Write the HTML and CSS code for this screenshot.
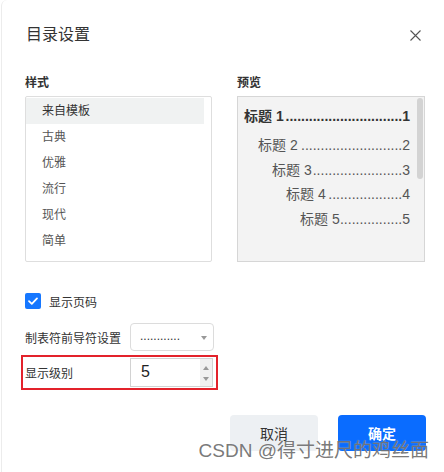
FILE: index.html
```html
<!DOCTYPE html>
<html lang="zh-CN">
<head>
<meta charset="utf-8">
<title>目录设置</title>
<link rel="stylesheet" href="styles.css">
</head>
<body>
<div class="dialog">
  <div class="header">
    <div class="title">目录设置</div>
    <svg class="close" width="11" height="11" viewBox="0 0 11 11"><path d="M0.5 0.5L10.5 10.5M10.5 0.5L0.5 10.5" stroke="#555" stroke-width="1.1" fill="none"/></svg>
  </div>
  <div class="columns">
    <div class="col">
      <div class="label">样式</div>
      <div class="list">
        <div class="item selected">来自模板</div>
        <div class="item">古典</div>
        <div class="item">优雅</div>
        <div class="item">流行</div>
        <div class="item">现代</div>
        <div class="item">简单</div>
      </div>
    </div>
    <div class="col">
      <div class="label">预览</div>
      <div class="preview">
        <div class="toc l1"><span class="t">标题 1</span><span class="dots">..............................</span><span class="n">1</span></div>
        <div class="toc l2"><span class="t">标题 2</span><span class="dots">..........................</span><span class="n">2</span></div>
        <div class="toc l3"><span class="t">标题 3</span><span class="dots">.......................</span><span class="n">3</span></div>
        <div class="toc l4"><span class="t">标题 4</span><span class="dots">...................</span><span class="n">4</span></div>
        <div class="toc l5"><span class="t">标题 5</span><span class="dots">................</span><span class="n">5</span></div>
        <div class="thumb"></div>
      </div>
    </div>
  </div>
  <div class="check-row">
    <span class="checkbox"><svg width="16" height="16" viewBox="0 0 16 16"><path d="M4 8.2L6.8 10.8L12 5.4" stroke="#fff" stroke-width="1.8" fill="none" stroke-linecap="round" stroke-linejoin="round"/></svg></span>
    <span class="check-label">显示页码</span>
  </div>
  <div class="field-row">
    <span class="field-label">制表符前导符设置</span>
    <div class="select"><span class="sel-dots">............</span><span class="caret"></span></div>
  </div>
  <div class="field-row level">
    <span class="field-label">显示级别</span>
    <div class="number"><span class="num-val">5</span><span class="spin"><span class="up"></span><span class="down"></span></span></div>
  </div>
  <div class="footer">
    <button class="btn cancel">取消</button>
    <button class="btn ok">确定</button>
  </div>
  <div class="watermark">CSDN @得寸进尺的鸡丝面</div>
</div>
</body>
</html>
```
FILE: styles.css
```css
* { box-sizing: border-box; }
html, body { margin: 0; padding: 0; background: #fff; }
body {
  font-family: "Liberation Sans", "Noto Sans CJK SC", sans-serif;
  color: #333;
}
.dialog {
  position: relative;
  width: 443px;
  height: 472px;
  margin-left: 1px;
  border-left: 1px solid #ececec;
  border-top-left-radius: 6px;
  overflow: hidden;
  padding: 23px 0 0 23px;
}
.header {
  display: flex;
  justify-content: space-between;
  align-items: center;
  height: 24px;
  padding-right: 23px;
}
.title {
  font-size: 16px;
  line-height: 24px;
  margin-left: 1px;
  color: #333;
}
.close { display: block; }
.columns {
  display: grid;
  grid-template-columns: 187px 188px;
  column-gap: 25px;
  margin-top: 28px;
}
.label {
  font-size: 12px;
  line-height: 16px;
  font-weight: bold;
  color: #333;
  margin-bottom: 5px;
}
.list {
  height: 166px;
  border: 1px solid #dedede;
  border-radius: 2px;
  padding: 1px 7px 0 0;
}
.item {
  height: 26px;
  line-height: 26px;
  font-size: 12px;
  padding-left: 16px;
  color: #555;
}
.item.selected { background: #f0f2f2; color: #333; }
.preview {
  position: relative;
  height: 166px;
  background: #f3f3f3;
  border: 1px solid #d6d6d6;
  padding: 3px 14px 0 6px;
}
.toc {
  display: flex;
  align-items: baseline;
  height: 24.5px;
  line-height: 24.5px;
  font-size: 14px;
  color: #555;
  white-space: nowrap;
}
.toc.l1 { height: 33px; line-height: 33px; font-weight: bold; color: #333; }
.toc.l2 { padding-left: 14px; }
.toc.l3 { padding-left: 28px; }
.toc.l4 { padding-left: 42px; }
.toc.l5 { padding-left: 56px; }
.toc .t { flex: none; }
.toc .dots { flex: 1 1 auto; text-align: right; min-width: 0; }
.toc .n { flex: none; }
.thumb {
  position: absolute;
  right: 1px;
  top: 1px;
  width: 6px;
  height: 81px;
  border-radius: 3px;
  background: #d3d3d3;
}
.check-row {
  display: flex;
  align-items: center;
  gap: 8px;
  margin-top: 31px;
  height: 16px;
}
.checkbox {
  width: 16px;
  height: 16px;
  border-radius: 2px;
  background: #1677ff;
  display: block;
}
.checkbox svg { display: block; }
.check-label { font-size: 12px; color: #333; }
.field-row {
  display: flex;
  align-items: center;
  margin-top: 14px;
  width: 189px;
}
.field-label {
  width: 105px;
  flex: none;
  font-size: 12px;
  color: #333;
}
.select {
  position: relative;
  width: 84px;
  height: 28px;
  border: 1px solid #dcdcdc;
  border-radius: 4px;
  display: flex;
  align-items: center;
  padding-left: 9px;
}
.sel-dots { font-size: 12px; color: #333; line-height: 1; margin-top: -3px; }
.caret {
  position: absolute;
  right: 6px;
  top: 12px;
  width: 0;
  height: 0;
  border-left: 3px solid transparent;
  border-right: 3px solid transparent;
  border-top: 4px solid #999;
}
.field-row.level {
  margin-top: 4px;
  margin-left: -4px;
  width: 197px;
  height: 35px;
  border: 2px solid #e3222b;
  padding: 1px 3px 2px 2px;
}
.number {
  position: relative;
  width: 83px;
  height: 29px;
  border: 1px solid #d2d2d2;
  display: flex;
  align-items: center;
  padding-left: 10px;
}
.num-val { font-size: 16px; color: #222; }
.spin {
  position: absolute;
  right: 0;
  top: 0;
  bottom: 0;
  width: 12px;
  background: #f1f1f1;
}
.spin .up, .spin .down {
  position: absolute;
  left: 3px;
  width: 0;
  height: 0;
  border-left: 3px solid transparent;
  border-right: 3px solid transparent;
}
.spin .up { top: 7px; border-bottom: 4px solid #999; }
.spin .down { top: 18px; border-top: 4px solid #999; }
.footer {
  display: flex;
  justify-content: flex-end;
  gap: 20px;
  margin-top: 25px;
  padding-right: 18px;
}
.btn {
  width: 88px;
  height: 36px;
  border: none;
  border-radius: 4px;
  font-family: "Liberation Sans", "Noto Sans CJK SC", sans-serif;
  font-size: 14px;
  padding: 0;
}
.btn.cancel { background: #edf0f3; color: #333; }
.btn.ok { background: #0a6cff; color: #fff; font-weight: bold; }
.watermark {
  position: absolute;
  right: 15px;
  top: 438px;
  font-size: 19px;
  line-height: 26px;
  color: rgba(105, 105, 105, 0.9);
  white-space: nowrap;
  text-shadow: 0 0 1px rgba(255,255,255,0.6);
}
```
